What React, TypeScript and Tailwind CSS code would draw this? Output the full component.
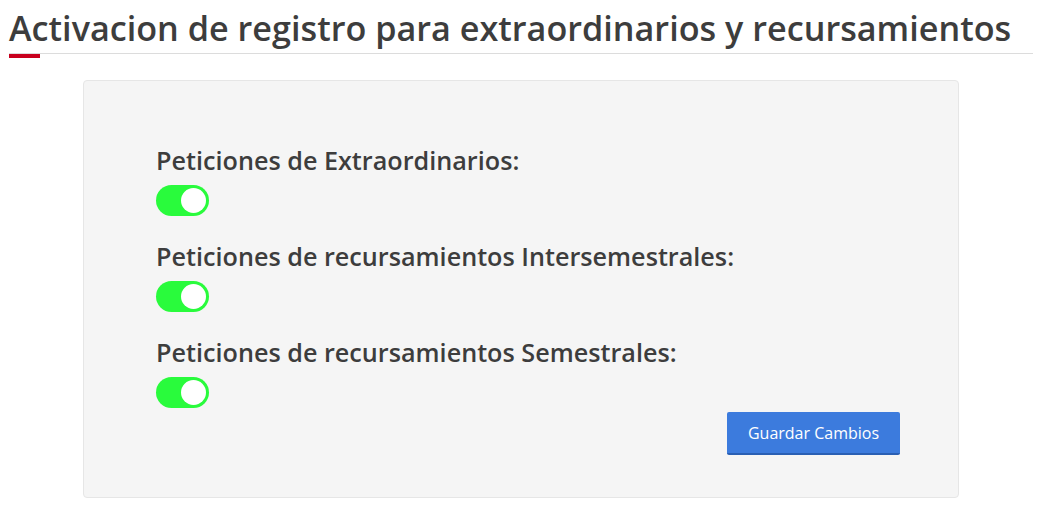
import { useState } from 'react';

type ToggleProps = {
    checked: boolean;
    onChange: () => void;
};

function Toggle({ checked, onChange }: ToggleProps) {
    return (
        <button
            type="button"
            onClick={onChange}
            className={`flex h-[31px] w-[53px] items-center rounded-full px-[3px] ${
                checked ? 'justify-end bg-[#29fb3c]' : 'justify-start bg-[#d6d6d6]'
            }`}
        >
            <span className="block h-[25px] w-[25px] rounded-full bg-white" />
        </button>
    );
}

const peticiones = [
    'Peticiones de Extraordinarios:',
    'Peticiones de recursamientos Intersemestrales:',
    'Peticiones de recursamientos Semestrales:',
];

export default function App() {
    const [estados, setEstados] = useState([true, true, true]);

    return (
        <div className="min-h-screen bg-white font-['Open_Sans',sans-serif] text-[#3d3d3d]">
            <div className="w-[1033px] pl-[9px]">
                <div className="border-b border-[#dcdcdc] pt-[6px] pb-[3px]">
                    <h1 className="text-[34.2px] leading-[44px] font-semibold">
                        Activacion de registro para extraordinarios y recursamientos
                    </h1>
                </div>
                <div className="h-[4px] w-[31px] bg-[#c8001e]" />

                <div className="mx-[74px] mt-[22px] rounded-[4px] border border-[#e6e6e6] bg-[#f5f5f5] pt-[61px] pr-[58px] pb-[42px] pl-[72px]">
                    <div className="flex flex-col gap-[22px]">
                        {peticiones.map((texto, i) => (
                            <div key={texto} className="flex flex-col gap-[7px]">
                                <span className="text-[25.2px] leading-[36px] font-semibold">
                                    {texto}
                                </span>
                                <Toggle
                                    checked={estados[i]}
                                    onChange={() =>
                                        setEstados((prev) =>
                                            prev.map((v, j) => (j === i ? !v : v)),
                                        )
                                    }
                                />
                            </div>
                        ))}
                    </div>
                    <div className="mt-[4px] flex justify-end">
                        <button
                            type="button"
                            className="h-[43px] w-[173px] rounded-[2px] border-b-2 border-[#2a5fb3] bg-[#3c7bdd] text-[16px] text-white"
                        >
                            Guardar Cambios
                        </button>
                    </div>
                </div>
            </div>
        </div>
    );
}
